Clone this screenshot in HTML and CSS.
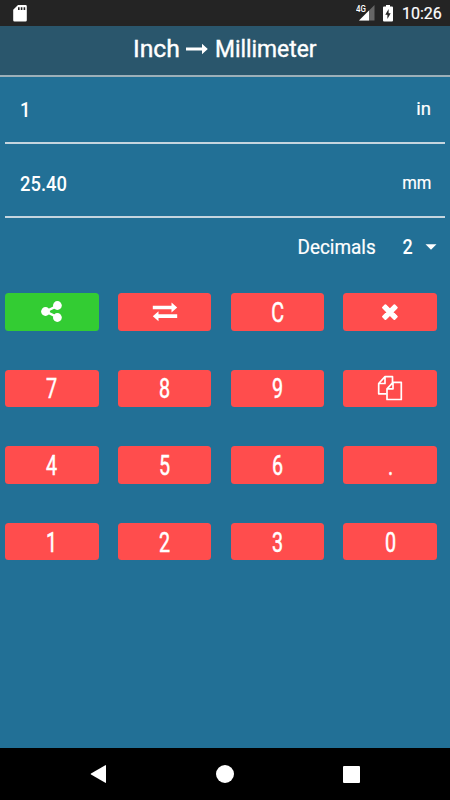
FILE: index.html
```
<!DOCTYPE html>
<html lang="en">
<head>
<meta charset="utf-8">
<title>Inch to Millimeter</title>
<link rel="stylesheet" href="styles.css">
</head>
<body>
<div class="status">
  <svg class="sd" width="14" height="17" viewBox="0 0 14 17"><path fill="#fff" d="M5 0h7.500a1.300 1.300 0 0 1 1.300 1.300v13.900a1.300 1.300 0 0 1-1.300 1.300h-11A1.300 1.300 0 0 1 .2 15.200V4.800z"/><path fill="#242424" d="M5 2.200h1.600v2.800H5zM7.800 2.200h1.600v2.800H7.800zM10.600 2.200h1.600v2.800h-1.600z"/></svg>
  <div class="signal"><span class="net">4G</span><svg width="16" height="16" viewBox="0 0 16 16"><path fill="#666" d="M15.500 0v15.500H0z"/><path fill="#fff" d="M10 5.500v10H0z"/></svg></div>
  <svg class="battery" width="10" height="17" viewBox="0 0 10 17"><path fill="#fff" d="M3 0h4v1.600h2a1 1 0 0 1 1 1v13a1 1 0 0 1-1 1H1a1 1 0 0 1-1-1v-13a1 1 0 0 1 1-1h2z"/><path fill="#242424" d="M5.600 4v4.200h2.100L4.400 14V9.800H2.300z"/></svg>
  <span class="clock">10:26</span>
</div>
<header class="title">
  <span class="word inch">Inch</span>
  <svg class="arrow" width="22" height="12" viewBox="0 0 22 12"><path fill="#fff" d="M0 4.400h16V.7L21.800 6 16 11.300V7.600H0z"/></svg>
  <span class="word milli">Millimeter</span>
</header>
<main>
  <div class="field"><span class="value">1</span><span class="unit">in</span></div>
  <div class="field"><span class="value amount">25.40</span><span class="unit mm">mm</span></div>
  <div class="decimals"><span class="label">Decimals</span><span class="count">2</span><svg width="12" height="6" viewBox="0 0 12 6"><path fill="#fff" d="M.5.200h11L6 5.700z"/></svg></div>
  <div class="keys">
    <button class="key share" aria-label="Share"><svg width="21" height="21" viewBox="0 0 21 21"><path d="M16.200 4.800L4.800 10.500l11.400 5.700" fill="none" stroke="#fff" stroke-width="2.500"/><g fill="#fff"><circle cx="16.400" cy="4.500" r="4.400"/><circle cx="4.500" cy="10.500" r="4.400"/><circle cx="16.400" cy="16.500" r="4.400"/></g></svg></button>
    <button class="key" aria-label="Swap"><svg width="26" height="20" viewBox="0 0 26 20"><path fill="#fff" d="M.8 3.700h18.700V.5L25.200 5.500l-5.700 5V7.300H.8zM25.200 12.200H6.500V9.200L.8 14.200l5.700 5v-3.200h18.700z"/></svg></button>
    <button class="key"><span>C</span></button>
    <button class="key" aria-label="Delete"><svg class="cross" width="18" height="18" viewBox="0 0 18 18"><path d="M3.700 3.900l10.600 10.600M14.300 3.900L3.700 14.500" stroke="#fff" stroke-width="4.800" fill="none"/><path fill="none" stroke="#fff" stroke-width="2" stroke-linejoin="round" d="M4.400 2.200L15.800 13.600 13.400 16 2 4.600zM13.400 2.200L2 13.600 4.400 16 15.800 4.600z"/></svg></button>
    <button class="key"><span>7</span></button>
    <button class="key"><span>8</span></button>
    <button class="key"><span>9</span></button>
    <button class="key" aria-label="Copy"><svg width="26" height="26" viewBox="0 0 26 26" fill="none" stroke="#fff" stroke-width="1.700" stroke-linejoin="round"><path d="M9.500 18.800H1.700V8.500L8 1.700h7.500v6M8 1.700v6.800H1.700"/><path d="M16 7.300h8.300v17.200H10V13.800zM16 7.300v6.500h-6"/></svg></button>
    <button class="key"><span>4</span></button>
    <button class="key"><span>5</span></button>
    <button class="key"><span>6</span></button>
    <button class="key"><span>.</span></button>
    <button class="key"><span>1</span></button>
    <button class="key"><span>2</span></button>
    <button class="key"><span>3</span></button>
    <button class="key"><span>0</span></button>
  </div>
</main>
<nav class="navbar">
  <svg width="17" height="20" viewBox="0 0 17 20"><path fill="#fff" d="M15.300 1.200q.7-.3.700.5v16.600q0 .8-.7.500L1 10.600q-.7-.6 0-1.200z"/></svg>
  <svg width="18" height="18" viewBox="0 0 18 18"><circle cx="9" cy="9" r="9" fill="#fff"/></svg>
  <svg width="17" height="17" viewBox="0 0 17 17"><rect width="17" height="17" rx="1" fill="#fff"/></svg>
</nav>
</body>
</html>
```
FILE: styles.css
```
* { box-sizing: border-box; }
body {
  margin: 0;
  width: 450px;
  height: 800px;
  display: flex;
  flex-direction: column;
  overflow: hidden;
  background: #227096;
  color: #fff;
  font-family: Roboto, "Liberation Sans", sans-serif;
}
svg { display: block; flex: none; }
.status {
  height: 26px;
  flex: none;
  display: flex;
  align-items: flex-start;
  background: #242424;
  padding: 5px 8px 0 13px;
}
.signal { display: flex; margin-left: auto; }
.net {
  font-size: 9px;
  line-height: 9px;
  font-weight: 500;
  margin-right: -8px;
  transform: scaleX(.88);
  transform-origin: left center;
}
.battery { margin-left: 8px; }
.clock {
  font-size: 16px;
  line-height: 18px;
  font-weight: 400;
  -webkit-text-stroke: .2px #fff;
  width: 40px;
  margin-left: 9px;
}
.title {
  height: 51px;
  flex: none;
  display: flex;
  align-items: center;
  background: #2a566c;
  border-bottom: 2px solid #9db0b9;
  padding: 0 0 3px 133px;
  font-size: 24px;
  line-height: 28px;
}
.word {
  transform-origin: left center;
  white-space: nowrap;
  -webkit-text-stroke: .4px #fff;
}
.inch { width: 53px; transform: scaleX(1.030); }
.milli { margin-left: 7px; transform: scaleX(.95); }
main { flex: 1; }
.field {
  height: 67px;
  margin: 0 5px;
  padding: 0 14px 0 15px;
  border-bottom: 2px solid #c5d5df;
  display: flex;
  justify-content: space-between;
  align-items: center;
  font-size: 20px;
}
.field + .field { height: 74px; padding-top: 8px; }
.value {
  font-weight: 500;
  transform: scaleX(.92);
  transform-origin: left center;
}
.unit {
  font-size: 18.500px;
  margin-top: -2px;
  transform-origin: right center;
  -webkit-text-stroke: .2px #fff;
}
.mm { transform: scaleX(.9); }
.decimals {
  height: 58px;
  display: flex;
  align-items: center;
  justify-content: flex-end;
  padding-right: 13px;
  font-size: 20px;
}
.label {
  margin-right: 26px;
  transform: scaleX(.945);
  transform-origin: right center;
  -webkit-text-stroke: .2px #fff;
}
.count { margin-right: 12px; font-weight: 500; transform: scaleX(.9); }
.keys {
  display: grid;
  grid-template-columns: repeat(4, 93.500px);
  grid-auto-rows: 37.500px;
  justify-content: space-between;
  row-gap: 39.100px;
  width: 432px;
  margin: 17px 0 0 5px;
}
.key {
  display: flex;
  align-items: center;
  justify-content: center;
  border: 0;
  border-radius: 3.500px;
  background: #ff4d4d;
  color: #fff;
  padding: 0;
  font: 400 27px Roboto, "Liberation Sans", sans-serif;
}
.key span { transform: translateY(.5px) scaleX(.73); -webkit-text-stroke: .5px #fff; }
.share { background: #33cc33; }
.navbar {
  height: 52px;
  flex: none;
  display: flex;
  align-items: center;
  justify-content: space-between;
  background: #000;
  padding: 0 90px;
}
```
